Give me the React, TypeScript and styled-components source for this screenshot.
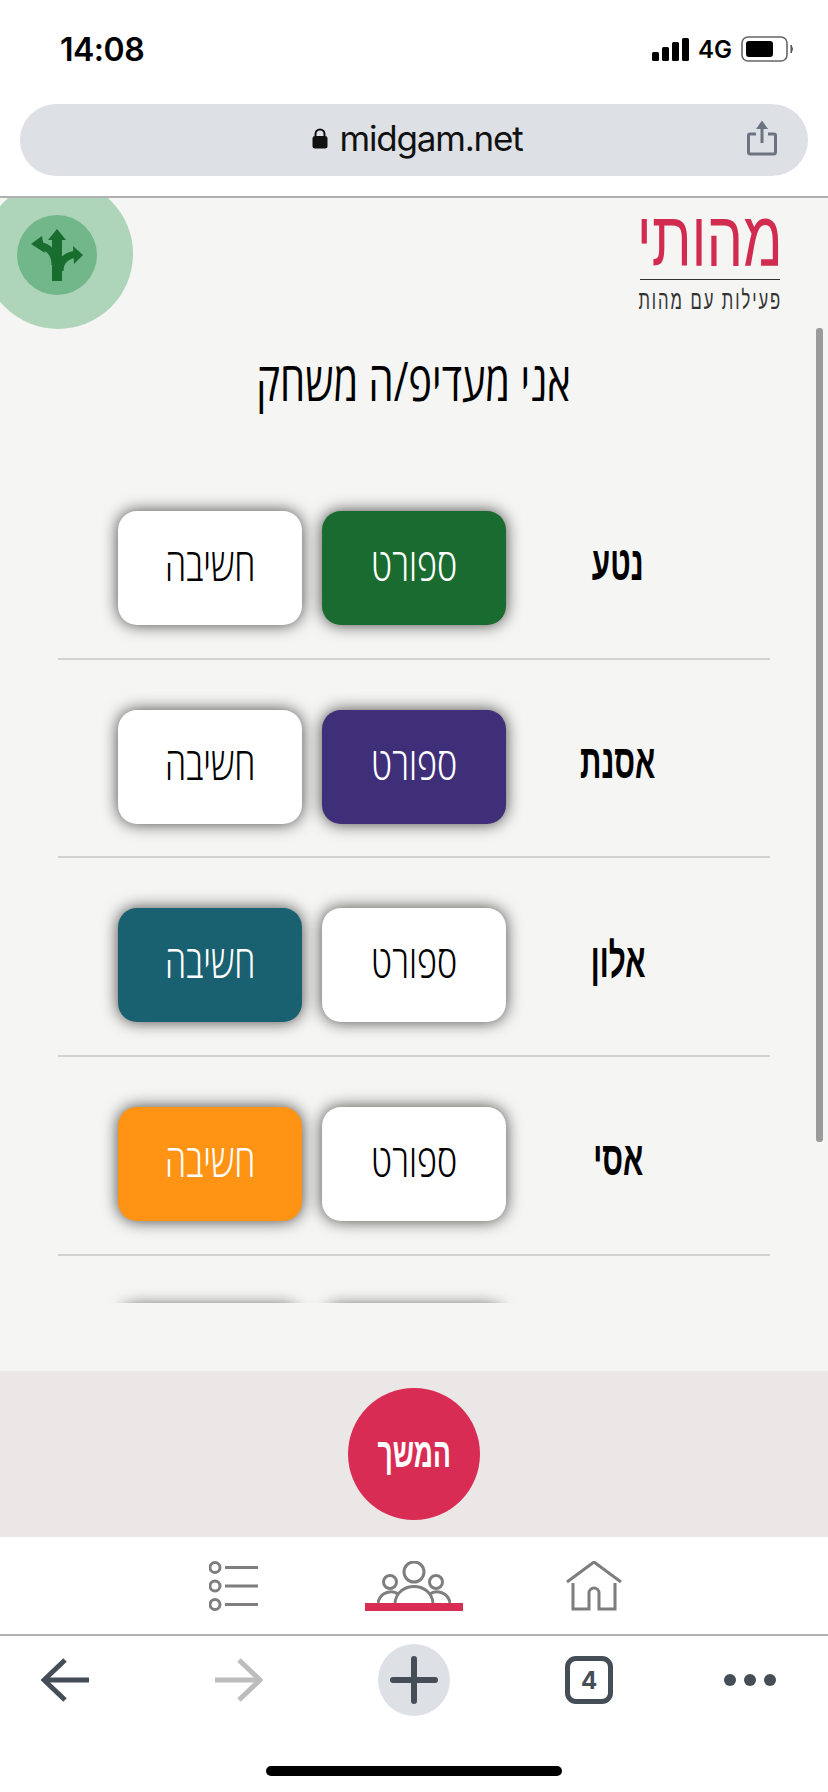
import React, { FC } from "react";
import styled, { createGlobalStyle } from "styled-components";

const rows = [
  { name: "נטע", sport: "#1a6b2f", think: "" },
  { name: "אסנת", sport: "#3f2e78", think: "" },
  { name: "אלון", sport: "", think: "#196070" },
  { name: "אסי", sport: "", think: "#ff9314" },
];

const App: FC = () => (
  <Page>
    <GlobalStyle />
    <StatusBar>
      <Time>14:08</Time>
      <StatusIcons>
        <SignalBars>
          <Bar $h={9} />
          <Bar $h={14} />
          <Bar $h={19} />
          <Bar $h={23} />
        </SignalBars>
        <Network>4G</Network>
        <BatteryIcon />
      </StatusIcons>
    </StatusBar>
    <AddressRow>
      <AddressBar>
        <LockIcon />
        <Url>midgam.net</Url>
        <ShareSlot>
          <ShareIcon />
        </ShareSlot>
      </AddressBar>
    </AddressRow>

    <Content>
      <BadgeClip>
        <RouteBadge>
          <RouteInner>
            <RouteIcon />
          </RouteInner>
        </RouteBadge>
      </BadgeClip>
      <Scrollbar />
      <Header>
        <Logo>
          <LogoMark>
            <LogoText>מהותי</LogoText>
          </LogoMark>
          <LogoRule />
          <LogoSub>פעילות עם מהות</LogoSub>
        </Logo>
      </Header>
      <Title>
        <TitleText>אני מעדיפ/ה משחק</TitleText>
      </Title>
      <ListClip>
        {rows.map((row) => (
          <Row key={row.name}>
            <NameCell>
              <NameText>{row.name}</NameText>
            </NameCell>
            <Choice $bg={row.sport}>
              <ChoiceText>ספורט</ChoiceText>
            </Choice>
            <Choice $bg={row.think}>
              <ChoiceText>חשיבה</ChoiceText>
            </Choice>
          </Row>
        ))}
        {/* next row is scrolled away, only the shadow of its buttons shows */}
        <Row>
          <NameCell />
          <Choice $bg="" />
          <Choice $bg="" />
        </Row>
      </ListClip>
    </Content>

    <Footer>
      <NextButton>
        <NextText>המשך</NextText>
      </NextButton>
    </Footer>

    <TabBar>
      <TabItem>
        <ListIcon />
      </TabItem>
      <TabItem>
        <PeopleIcon />
        <ActiveMark />
      </TabItem>
      <TabItem>
        <HouseIcon />
      </TabItem>
    </TabBar>

    <BrowserBar>
      <BrowserItem>
        <ArrowIcon color="#454d57" />
      </BrowserItem>
      <BrowserItem>
        <ForwardFlip>
          <ArrowIcon color="#bdbdbd" />
        </ForwardFlip>
      </BrowserItem>
      <BrowserItem>
        <PlusCircle>
          <PlusIcon />
        </PlusCircle>
      </BrowserItem>
      <BrowserItem>
        <TabsCount>4</TabsCount>
      </BrowserItem>
      <BrowserItem>
        <Dots>
          <Dot />
          <Dot />
          <Dot />
        </Dots>
      </BrowserItem>
    </BrowserBar>
    <HomeRow>
      <HomeIndicator />
    </HomeRow>
  </Page>
);

export default App;

const BatteryIcon = () => (
  <svg width="54" height="26" viewBox="0 0 54 26">
    <rect x="1" y="1" width="45" height="24" rx="6" fill="none" stroke="#666" strokeWidth="1.6" />
    <rect x="5" y="5" width="27" height="16" rx="3" fill="#000" />
    <path d="M50 9 Q53 13 50 17 Z" fill="#555" stroke="#555" strokeWidth="1" />
  </svg>
);

const LockIcon = () => (
  <svg width="16" height="21" viewBox="0 0 16 21">
    <path d="M3.5 9 V6 a4.5 4.5 0 0 1 9 0 V9" fill="none" stroke="#111" strokeWidth="2" />
    <rect x="0.5" y="8" width="15" height="12.5" rx="2.5" fill="#111" />
  </svg>
);

const ShareIcon = () => (
  <svg width="30" height="36" viewBox="0 0 30 36" fill="none" stroke="#6b7480">
    <path d="M9 14 H3 a1.5 1.5 0 0 0 -1.5 1.5 V32 a2 2 0 0 0 2 2 H26.5 a2 2 0 0 0 2 -2 V15.5 a1.5 1.5 0 0 0 -1.5 -1.5 H21" strokeWidth="3" />
    <path d="M15 23 V3" strokeWidth="3" />
    <path d="M15 0.5 L21 9 H9 Z" fill="#6b7480" stroke="none" />
  </svg>
);

const RouteIcon = () => (
  <svg width="60" height="60" viewBox="0 0 60 60" fill="#186d2f">
    <path d="M30 4 L39 15 H21 Z" />
    <path d="M4 19 L15 11 L18 28 Z" />
    <path d="M56 30 L46 21 L47 39 Z" />
    <g fill="none" stroke="#186d2f">
      <path d="M30 56 V12" strokeWidth="10" />
      <path d="M12 20 Q28 23 28 40" strokeWidth="7" />
      <path d="M50 29 Q33 31 33 46" strokeWidth="7" />
    </g>
  </svg>
);

const ListIcon = () => (
  <svg width="50" height="50" viewBox="0 0 50 50" fill="none" stroke="#7f7d7d" strokeWidth="3">
    <circle cx="6" cy="6.5" r="5" />
    <circle cx="6" cy="25" r="5" />
    <circle cx="6" cy="43.5" r="5" />
    <path d="M16 6.5 H49 M16 25 H49 M16 43.5 H49" />
  </svg>
);

const PeopleIcon = () => (
  <svg width="74" height="42" viewBox="0 0 74 42" fill="none" stroke="#7f7d7d" strokeWidth="3">
    <ellipse cx="37" cy="11" rx="10" ry="10" />
    <circle cx="13" cy="21" r="6.5" />
    <circle cx="59" cy="21" r="6.5" />
    <path d="M18 42 C20 20 54 20 56 42" />
    <path d="M1 42 C3 30 16 29 21 33" />
    <path d="M73 42 C71 30 58 29 53 33" />
  </svg>
);

const HouseIcon = () => (
  <svg width="56" height="50" viewBox="0 0 56 50" fill="none" stroke="#7f7d7d" strokeWidth="3">
    <path d="M1 21 L28 1 L55 21" />
    <path d="M7 22 V48 H23 V32 a5 5 0 0 1 10 0 V48 H49 V22" />
  </svg>
);

const ArrowIcon: FC<{ color: string }> = ({ color }) => (
  <svg width="48" height="44" viewBox="0 0 48 44" fill="none" stroke={color} strokeWidth="5">
    <path d="M48 22 H4" />
    <path d="M24 2 L3 22 L24 42" />
  </svg>
);

const PlusIcon = () => (
  <svg width="48" height="48" viewBox="0 0 48 48" stroke="#454d57" strokeWidth="6" strokeLinecap="round">
    <path d="M24 3 V45 M3 24 H45" />
  </svg>
);

const GlobalStyle = createGlobalStyle`
  html, body {
    margin: 0;
    padding: 0;
    background: #fff;
  }
`;

const Page = styled.div`
  width: 828px;
  height: 1792px;
  display: flex;
  flex-direction: column;
  overflow: hidden;
  font-family: "Liberation Sans", Arial, sans-serif;
`;

const StatusBar = styled.div`
  height: 104px;
  box-sizing: border-box;
  padding: 0 33px 6px 60px;
  display: flex;
  align-items: center;
  justify-content: space-between;
`;

const Time = styled.div`
  font-family: Inter, sans-serif;
  font-size: 32px;
  font-weight: 600;
  letter-spacing: -0.5px;
  color: #000;
`;

const StatusIcons = styled.div`
  display: flex;
  align-items: center;
  gap: 9px;
`;

const SignalBars = styled.div`
  display: flex;
  align-items: flex-end;
  gap: 3px;
  height: 23px;
`;

const Bar = styled.div<{ $h: number }>`
  width: 7px;
  height: ${(p) => p.$h}px;
  background: #000;
  border-radius: 1.5px;
`;

const Network = styled.div`
  font-family: Inter, sans-serif;
  font-size: 24px;
  font-weight: 600;
`;

const AddressRow = styled.div`
  height: 94px;
  box-sizing: border-box;
  padding: 0 20px;
  border-bottom: 2px solid #b0b0b0;
`;

const AddressBar = styled.div`
  position: relative;
  height: 72px;
  box-sizing: border-box;
  padding: 0 0 4px 6px;
  border-radius: 36px;
  background: #dde0e5;
  display: flex;
  align-items: center;
  justify-content: center;
  gap: 12px;
`;

const Url = styled.div`
  font-family: Inter, sans-serif;
  font-size: 35px;
  color: #111;
  letter-spacing: -1.2px;
`;

const ShareSlot = styled.div`
  position: absolute;
  right: 31px;
  top: 16px;
`;

const Content = styled.div`
  position: relative;
  height: 1173px;
  background: #f5f5f3;
  direction: rtl;
`;

const BadgeClip = styled.div`
  position: absolute;
  left: 0;
  top: 0;
  width: 140px;
  height: 140px;
  overflow: hidden;
`;

const RouteBadge = styled.div`
  position: absolute;
  left: -17px;
  top: -19px;
  width: 150px;
  height: 150px;
  border-radius: 50%;
  background: #aed4ba;
  display: flex;
  align-items: center;
  justify-content: center;
`;

const RouteInner = styled.div`
  width: 80px;
  height: 80px;
  margin: 2px 0 0 -2px;
  border-radius: 50%;
  background: #72b78a;
  display: flex;
  align-items: center;
  justify-content: center;
`;

const Scrollbar = styled.div`
  position: absolute;
  left: 816px;
  top: 130px;
  width: 7px;
  height: 814px;
  border-radius: 3px;
  background: #9a9a9a;
`;

const Header = styled.div`
  height: 120px;
  box-sizing: border-box;
  padding: 15px 47px 0 0;
`;

const Logo = styled.div`
  width: 142px;
  display: flex;
  flex-direction: column;
  align-items: center;
`;

const LogoMark = styled.div`
  height: 52px;
  width: 100%;
  display: flex;
  align-items: center;
  justify-content: center;
`;

const LogoText = styled.span`
  display: inline-block;
  font-size: 78px;
  line-height: 52px;
  color: #d22b50;
  white-space: nowrap;
  transform: scaleX(0.74);
`;

const LogoRule = styled.div`
  width: 140px;
  height: 1px;
  margin-top: 14px;
  background: #333;
`;

const LogoSub = styled.div`
  margin-top: 9px;
  font-size: 26px;
  letter-spacing: 3px;
  line-height: 22px;
  color: #333;
  white-space: nowrap;
  transform: scaleX(0.64);
`;

const Title = styled.div`
  height: 143px;
  box-sizing: border-box;
  padding-top: 34px;
  display: flex;
  justify-content: center;
`;

const TitleText = styled.h1`
  margin: 0;
  font-family: "Open Sans", "Liberation Sans", sans-serif;
  font-size: 54px;
  line-height: 56px;
  font-weight: 400;
  color: #000;
  white-space: nowrap;
  transform: scaleX(0.74);
`;

const ListClip = styled.div`
  height: 842px;
  overflow: hidden;
`;

const Row = styled.div`
  width: 712px;
  height: 198.67px;
  box-sizing: border-box;
  margin-right: 58px;
  padding: 50px 60px 0 0;
  border-bottom: 2px solid #d2d2d2;
  display: flex;
  align-items: flex-start;
  gap: 20px;
`;

const NameCell = styled.div`
  width: 184px;
  height: 104px;
  display: flex;
  align-items: center;
  justify-content: center;
`;

const NameText = styled.span`
  display: inline-block;
  font-size: 48px;
  font-weight: 700;
  color: #000;
  transform: scaleX(0.62);
`;

const Choice = styled.div<{ $bg: string }>`
  width: 184px;
  height: 114px;
  box-sizing: border-box;
  padding-bottom: 10px;
  border-radius: 19px;
  background: ${(p) => p.$bg || "#fff"};
  color: ${(p) => (p.$bg ? "#fff" : "#000")};
  box-shadow: 0 0 16px rgba(0, 0, 0, 0.72);
  display: flex;
  align-items: center;
  justify-content: center;
`;

const ChoiceText = styled.span`
  display: inline-block;
  font-family: "Open Sans", "Liberation Sans", sans-serif;
  font-size: 46px;
  font-weight: 300;
  transform: scaleX(0.74);
`;

const Footer = styled.div`
  height: 166px;
  background: #ebe7e6;
  display: flex;
  align-items: center;
  justify-content: center;
`;

const NextButton = styled.div`
  width: 132px;
  height: 132px;
  border-radius: 50%;
  background: #d92c55;
  display: flex;
  align-items: center;
  justify-content: center;
`;

const NextText = styled.span`
  display: inline-block;
  margin-bottom: 3px;
  font-size: 42px;
  font-weight: 700;
  color: #fff;
  transform: scaleX(0.63);
`;

const TabBar = styled.div`
  height: 99px;
  box-sizing: border-box;
  padding-top: 24px;
  border-bottom: 2px solid #b0b0b0;
  display: flex;
  justify-content: center;
`;

const TabItem = styled.div`
  width: 180px;
  display: flex;
  flex-direction: column;
  align-items: center;
`;

const ActiveMark = styled.div`
  width: 98px;
  height: 8px;
  background: #d92c55;
`;

const BrowserBar = styled.div`
  height: 88px;
  display: grid;
  grid-template-columns: 129px 220px 130px 220px 102px;
  align-items: center;
  justify-items: center;
`;

const BrowserItem = styled.div`
  display: flex;
  align-items: center;
  justify-content: center;
`;

const ForwardFlip = styled.div`
  display: flex;
  transform: scaleX(-1);
`;

const PlusCircle = styled.div`
  width: 72px;
  height: 72px;
  border-radius: 50%;
  background: #dde0e5;
  display: flex;
  align-items: center;
  justify-content: center;
`;

const TabsCount = styled.div`
  width: 48px;
  height: 48px;
  box-sizing: border-box;
  border: 5px solid #454d57;
  border-radius: 11px;
  display: flex;
  align-items: center;
  justify-content: center;
  font-family: Inter, sans-serif;
  font-size: 24px;
  font-weight: 700;
  color: #454d57;
`;

const Dots = styled.div`
  display: flex;
  gap: 8px;
`;

const Dot = styled.div`
  width: 12px;
  height: 12px;
  border-radius: 50%;
  background: #454d57;
`;

const HomeRow = styled.div`
  flex: 1;
  display: flex;
  justify-content: center;
  padding-top: 42px;
`;

const HomeIndicator = styled.div`
  width: 296px;
  height: 10px;
  border-radius: 5px;
  background: #000;
`;
